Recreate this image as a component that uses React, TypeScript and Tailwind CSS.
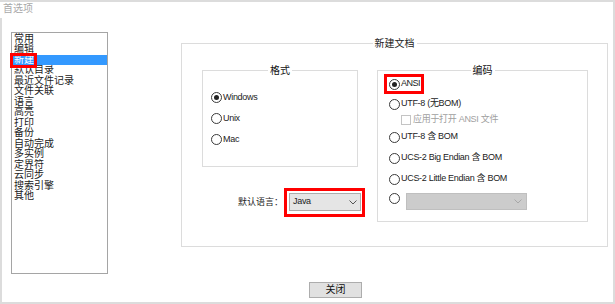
import React from 'react';

const listItems = ['常用', '编辑', '新建', '默认目录', '最近文件记录', '文件关联', '语言', '高亮', '打印', '备份', '自动完成', '多实例', '定界符', '云同步', '搜索引擎', '其他'];

const Radio: React.FC<{ checked?: boolean }> = ({ checked }) => (
  <span className="w-[11px] h-[11px] rounded-full border border-[#3a3a3a] bg-white flex items-center justify-center shrink-0">
    {checked && <span className="w-[5px] h-[5px] rounded-full bg-[#222]" />}
  </span>
);

const Chevron: React.FC<{ color: string }> = ({ color }) => (
  <svg width="8" height="5" viewBox="0 0 8 5" fill="none">
    <polyline points="0.5,0.5 4,4 7.5,0.5" stroke={color} strokeWidth="1" />
  </svg>
);

const Group: React.FC<{ title: string; className: string; children: React.ReactNode }> = ({ title, className, children }) => (
  <div className={`relative border border-[#dcdcdc] ${className}`}>
    <span className="absolute left-1/2 top-0 -translate-x-1/2 -translate-y-1/2 bg-white px-[2px] text-[10px] leading-none tracking-normal text-[#111]">{title}</span>
    {children}
  </div>
);

export default function App() {
  return (
    <div className="w-[615px] h-[304px] bg-white border-t-2 border-r-2 border-b-2 border-[#dcdcdc] flex flex-col overflow-hidden text-[#222] font-['Liberation_Sans','Noto_Sans_CJK_SC',sans-serif]">
      <div className="h-[16px] pl-[3px] text-[10px] leading-[14px] text-[#a8a8a8]">首选项</div>
      <div className="flex-1 flex border-l-2 border-[#dcdcdc]">
        {/* category list */}
        <ul className="ml-[9px] mt-[14px] w-[97px] h-[242px] border border-[#a5a5a5] pt-[1px] text-[10px] leading-[10.47px] text-[#222]">
          {listItems.map((item) =>
            item === '新建' ? (
              <li key={item} className="relative pl-[2px] bg-[#3399ff] text-white">
                {item}
                <span className="absolute left-[-2px] top-[-2px] w-[27px] h-[15px] border-[3px] border-[#ff0000]" />
              </li>
            ) : (
              <li key={item} className="pl-[2px]">{item}</li>
            )
          )}
        </ul>

        <div className="ml-[73px] mt-[25px] flex flex-col">
          <div className="relative w-[427px] h-[204px] border border-[#dcdcdc] flex pl-[20px] pt-[26px]">
            <span className="absolute left-1/2 top-0 -translate-x-1/2 -translate-y-1/2 bg-white px-[2px] text-[10px] leading-none text-[#222]">新建文档</span>

            <div className="w-[156px] shrink-0 flex flex-col">
              <Group title="格式" className="w-[156px] h-[97px] pt-[16px] pl-[8px] text-[9px] tracking-[-0.3px]">
                {['Windows', 'Unix', 'Mac'].map((name, i) => (
                  <div key={name} className="h-[21px] flex items-center gap-[1px]">
                    <Radio checked={i === 0} />
                    <span>{name}</span>
                  </div>
                ))}
              </Group>
              <div className="mt-[21px] flex items-center pl-[36px] w-max">
                <span className="text-[9px] mr-[1px]">默认语言：</span>
                <div className="border-[3px] border-[#ff0000] pl-[2px] pr-[1px] pt-[2px] pb-[3px]">
                  <div className="w-[72px] h-[18px] bg-[#e5e5e5] border border-[#acacac] flex items-center justify-between pl-[3px] pr-[3px] text-[9px] tracking-[-0.3px]">
                    <span>Java</span>
                    <Chevron color="#555" />
                  </div>
                </div>
              </div>
            </div>

            <div className="ml-[19px]">
              <Group title="编码" className="w-[211px] h-[152px] pt-[3px] text-[9px] tracking-[-0.3px] flex flex-col">
                <div className="ml-[6px] w-[40px] h-[20px] border-[3px] border-[#ff0000] flex items-center pl-[2px] gap-[1px]">
                  <Radio checked />
                  <span className="tracking-[-0.5px]">ANSI</span>
                </div>
                <div className="h-[20px] pl-[11px] flex items-center gap-[1px]">
                  <Radio />
                  <span>UTF-8 (无BOM)</span>
                </div>
                <div className="h-[12px] pl-[23px] flex items-center gap-[2px] text-[#a0a0a0]">
                  <span className="w-[10px] h-[10px] border border-[#c4c4c4] bg-white" />
                  <span>应用于打开 ANSI 文件</span>
                </div>
                <div className="mt-[1px] h-[20px] pl-[11px] flex items-center gap-[1px]">
                  <Radio />
                  <span>UTF-8 含 BOM</span>
                </div>
                <div className="mt-[1px] h-[20px] pl-[11px] flex items-center gap-[1px]">
                  <Radio />
                  <span>UCS-2 Big Endian 含 BOM</span>
                </div>
                <div className="mt-[1px] h-[20px] pl-[11px] flex items-center gap-[1px]">
                  <Radio />
                  <span>UCS-2 Little Endian 含 BOM</span>
                </div>
                <div className="h-[20px] pl-[11px] flex items-start">
                  <span className="mt-[4px]"><Radio /></span>
                  <div className="mt-[4px] ml-[6px] w-[121px] h-[17px] bg-[#cccccc] border border-[#bfbfbf] flex items-center justify-end pr-[4px]">
                    <Chevron color="#a8a8a8" />
                  </div>
                </div>
              </Group>
            </div>
          </div>

          <button className="ml-[128px] mt-[35px] w-[53px] h-[16px] bg-[#e1e1e1] border border-[#adadad] text-[10px] leading-none flex items-center justify-center text-[#111]">
            关闭
          </button>
        </div>
      </div>
    </div>
  );
}
